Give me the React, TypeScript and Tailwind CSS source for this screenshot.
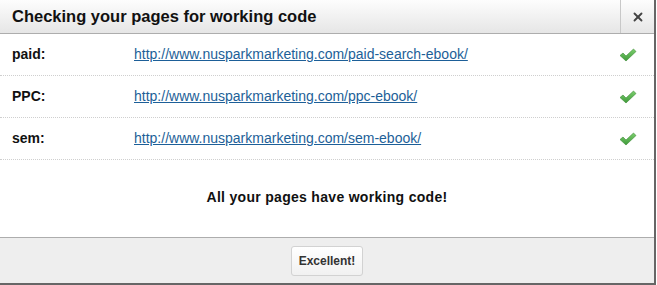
import { X } from "lucide-react";

const rows = [
  { label: "paid:", url: "http://www.nusparkmarketing.com/paid-search-ebook/" },
  { label: "PPC:", url: "http://www.nusparkmarketing.com/ppc-ebook/" },
  { label: "sem:", url: "http://www.nusparkmarketing.com/sem-ebook/" },
];

const Check = () => (
  <svg width="18" height="14" viewBox="0 0 18 14">
    <defs>
      <linearGradient id="ck" x1="0" y1="0" x2="0" y2="1">
        <stop offset="0" stopColor="#7ccf6e" />
        <stop offset="1" stopColor="#3f9a3a" />
      </linearGradient>
    </defs>
    <path d="M1 7.5 L4 5 L7 8 L14.5 1 L17 3.5 L7 13 Z" fill="url(#ck)" stroke="#3b8a34" strokeWidth="0.6" strokeLinejoin="round" />
  </svg>
);

export default function App() {
  return (
    <div className="w-[657px] h-[285px] bg-white" style={{ fontFamily: "'Liberation Sans', Arial, sans-serif" }}>
      <div className="w-[656px] h-[285px] flex flex-col border-r-2 border-b-2 border-[#666] bg-white">
        {/* HEADER */}
        <div className="h-[34px] flex items-stretch border-b border-[#adadad] bg-gradient-to-b from-[#fdfdfd] to-[#e6e6e6]">
          <div className="flex-1 flex items-center pl-3 text-[16.5px] font-bold text-[#111]">
            Checking your pages for working code
          </div>
          <div className="w-[34px] flex items-center justify-center border-l border-[#c8c8c8]">
            <X className="w-[14px] h-[14px] text-[#444]" strokeWidth={3.2} />
          </div>
        </div>

        {/* ROWS */}
        <div className="flex flex-col">
          {rows.map((r) => (
            <div
              key={r.label}
              className="h-[42px] flex items-center border-b border-dotted border-[#cfcfcf] text-[14px]"
            >
              <div className="w-[134px] pl-3 font-bold text-[#111]">{r.label}</div>
              <a href="#" className="flex-1 text-[#1d5f98] underline">
                {r.url}
              </a>
              <div className="w-[36px] flex items-center pl-[1px]">
                <Check />
              </div>
            </div>
          ))}
        </div>

        <div className="flex-1 flex items-center justify-center text-[14px] tracking-[0.3px] font-bold text-[#111] pb-[2px]">
          All your pages have working code!
        </div>

        {/* FOOTER */}
        <div className="h-[46px] flex items-center justify-center border-t border-[#adadad] bg-[#eeeeee]">
          <button className="h-[30px] px-[7px] rounded-[3px] border border-[#d2d2d2] bg-gradient-to-b from-[#ffffff] to-[#f1f1f1] text-[12px] font-bold text-[#333]">
            Excellent!
          </button>
        </div>
      </div>
    </div>
  );
}
